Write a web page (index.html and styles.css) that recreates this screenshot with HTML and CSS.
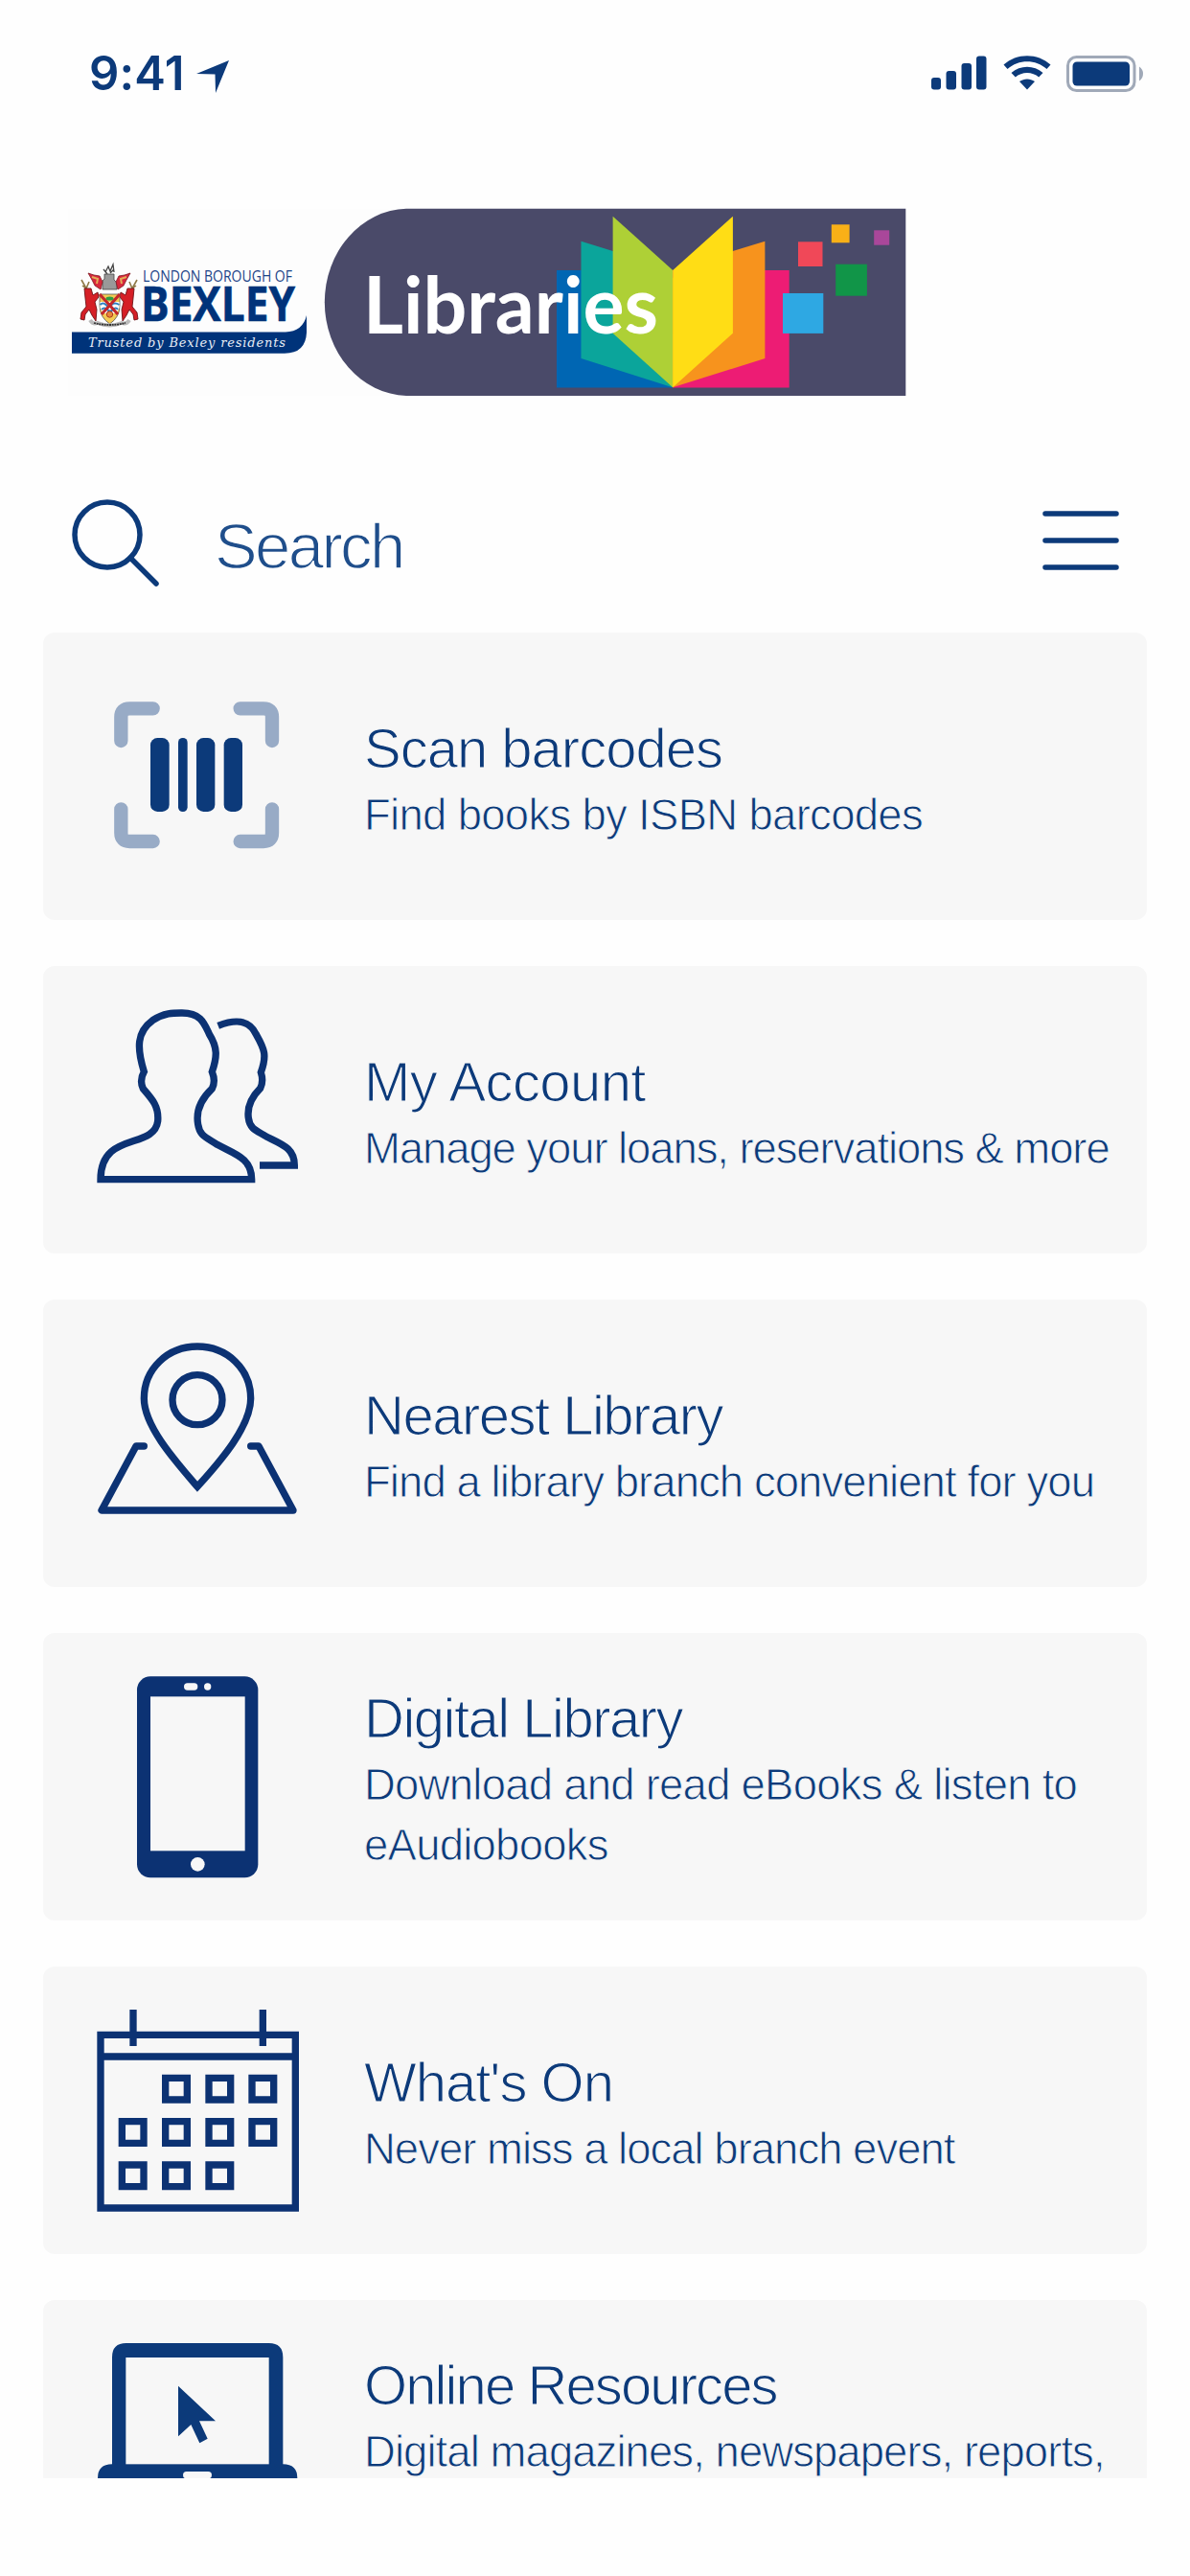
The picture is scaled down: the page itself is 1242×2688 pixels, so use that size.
FILE: index.html
```html
<!DOCTYPE html>
<html lang="en">
<head>
<meta charset="utf-8">
<title>Bexley Libraries</title>
<link rel="stylesheet" href="styles.css">
</head>
<body>
<div class="app">
  <header class="status">
    <span class="time">9:41</span>
    <svg class="locate" viewBox="0 0 34 34"><path d="M34 0 L20 34 L19.500 14.500 L0 14 Z"/></svg>
    <svg class="phone-state" viewBox="972 57 222 40">
      <rect x="972" y="81" width="10" height="12.500" rx="3"/><rect x="987.500" y="74" width="10.500" height="19.500" rx="3"/><rect x="1003.500" y="66" width="10.500" height="27.500" rx="3"/><rect x="1019" y="58.500" width="10.500" height="35" rx="3"/>
      <path d="M1047.500 67.500 C1061 55 1083 55 1096.500 67.500 L1092.500 72 C1081 61.500 1063 61.500 1051.500 72 Z"/>
      <path d="M1055.500 76 C1065 67.500 1079 67.500 1088.500 76 L1084.200 80.500 C1077.500 74.500 1066.500 74.500 1059.800 80.500 Z"/>
      <path d="M1064 85 C1069 81.500 1075 81.500 1080 85 L1072 93.500 Z"/>
      <rect class="shell" x="1114.500" y="59.500" width="69.500" height="35" rx="9"/>
      <rect x="1119.500" y="64.500" width="59.500" height="25" rx="4.500"/>
      <path class="nub" d="M1189 69.500 Q1193 72 1193 77 Q1193 82 1189 84.500 Z"/>
    </svg>
  </header>

  <svg class="logo" viewBox="71 217 875 197">
    <rect x="71" y="218" width="874" height="195" fill="#fdfdfd"/>
    <g class="crest">
      <path d="M110 284 l3 -6 2 5 3 -7 1 8 M108 281 l4 5 M119 281 l-4 4" fill="none" stroke="#444" stroke-width="1.300"/>
      <path d="M109 286 h10 v6 l3 3 v7 h-15 v-9 l2 -2z" fill="#999" stroke="#444" stroke-width=".8"/>
      <path d="M92 285 l6 2 6 1 3 6 -2 8 -6 -4 -3 -6z M136 285 l-6 2 -6 1 -3 6 2 8 6 -4 3 -6z" fill="#d8283c" stroke="#7d1822" stroke-width=".8"/>
      <path d="M96 289 l6 2 -1 5 M132 289 l-6 2 1 5" fill="none" stroke="#e3ad58" stroke-width="2"/>
      <path d="M85 292 l5 9 3 -7 M86 298 l5 4 M143 292 l-5 9 -3 -7 M142 298 l-5 4" fill="none" stroke="#8f7948" stroke-width="1.600"/>
      <path d="M88 301 l7 0 2 7 5 -3 1 5 -4 5 2 8 -1 12 -4 -6 -3 -6 -4 5 -1 6 -4 -1 1 -7 5 -6 -1 -9z" fill="#d51f26" stroke="#6d1216" stroke-width=".9"/>
      <path d="M140 301 l-7 0 -2 7 -5 -3 -1 5 4 5 -2 8 1 12 4 -6 3 -6 4 5 1 6 4 -1 -1 -7 -5 -6 1 -9z" fill="#d51f26" stroke="#6d1216" stroke-width=".9"/>
      <path d="M104 307 h21 v12 q0 12 -10.500 19 q-10.500 -7 -10.500 -19z" fill="#f3cb54" stroke="#555" stroke-width=".8"/>
      <path d="M104.500 315 h20 v6 l-3 6 h-14 l-3 -6z" fill="#fff"/>
      <path d="M104.500 318 q3 -3 6 0 t6 0 t8 0 M106 323 q3 -3 6 0 t6 0 t5 0" fill="none" stroke="#2d7fc1" stroke-width="2"/>
      <path d="M104 307 L123 328 M125 307 L106 328" stroke="#c3272b" stroke-width="3.200"/>
      <ellipse cx="114.500" cy="311.500" rx="4" ry="2" fill="#2e9c44"/>
      <circle cx="114.500" cy="328" r="3.200" fill="#e8863a" stroke="#a93820"/>
      <path d="M94 334 q3 5 8 3 q12 5 25 0 q5 2 8 -3" fill="none" stroke="#bbb" stroke-width="4"/>
      <path d="M98 337 q16 4 33 0" fill="none" stroke="#333" stroke-width="1.800" stroke-dasharray="2 .7"/>
    </g>
    <text class="borough" x="149" y="294" textLength="156" lengthAdjust="spacingAndGlyphs">LONDON BOROUGH OF</text>
    <text class="bexley" x="147" y="335" textLength="161" lengthAdjust="spacingAndGlyphs">BEXLEY</text>
    <path d="M75 346.500 H298 Q316 346 320 329 V347 Q319 368.700 297 368.700 H75 Z" fill="#00337a"/>
    <text class="motto" x="92" y="361.500" textLength="206">Trusted by Bexley residents</text>
    <path d="M945.300 217.700 H424 A88 97.700 0 0 0 424 413 H945.300 Z" fill="#4a4a69"/>
    <path d="M581 282 H702 V404.500 H581 Z" fill="#0066b3"/>
    <path d="M702 282 H823.700 V404.500 H702 Z" fill="#ed1c74"/>
    <path d="M606.500 251.700 L639.600 262 L702 290 V404.300 L606.500 374 Z" fill="#0ba59b"/>
    <path d="M798.400 251.700 L764.900 262 L702 290 V404.300 L798.400 374 Z" fill="#f7931d"/>
    <path d="M639.600 225.700 L702.200 282 V404.300 L639.600 347.700 Z" fill="#aed036"/>
    <path d="M764.900 225.700 L702.200 282 V404.300 L764.900 347.700 Z" fill="#ffdd15"/>
    <rect x="833" y="252.300" width="25.500" height="25.700" fill="#f04858"/>
    <rect x="867.800" y="234.300" width="18.800" height="19" fill="#f9b017"/>
    <rect x="912.200" y="240.300" width="16" height="15.400" fill="#a9479a"/>
    <rect x="872.200" y="275.700" width="32.700" height="33" fill="#119548"/>
    <rect x="817" y="306" width="42.300" height="41.900" fill="#2ea8e3"/>
    <text class="libraries" x="379" y="348" textLength="308" lengthAdjust="spacingAndGlyphs">Libraries</text>
  </svg>

  <div class="search">
    <svg class="lens" viewBox="0 0 94 94"><circle cx="38" cy="38" r="34"/><path d="M62 62 L89 89"/></svg>
    <span class="search-label">Search</span>
    <svg class="menu" viewBox="0 0 80 64"><path d="M3 4 H77 M3 32 H77 M3 60 H77"/></svg>
  </div>

  <main class="list">
    <section class="card scan">
      <svg class="icon" viewBox="183 165 630 630">
        <path class="frame" d="M259 369 V295 Q259 268 286 268 H359 M632 268 H705 Q732 268 732 295 V369 M732 583 V657 Q732 684 705 684 H632 M359 684 H286 Q259 684 259 657 V583"/>
        <rect x="351" y="360" width="59" height="231" rx="22"/><rect x="438" y="360" width="29" height="231" rx="14"/><rect x="495" y="360" width="58" height="231" rx="22"/><rect x="581" y="360" width="58" height="231" rx="22"/>
      </svg>
      <div class="copy"><h2>Scan barcodes</h2><p>Find books by ISBN barcodes</p></div>
    </section>
    <section class="card account">
      <svg class="icon line" viewBox="183 159 630 630">
        <path d="M195 692 C195 540 362 600 374 510 C378 465 358 442 328 408 Q316 382 331 355 C308 280 308 230 358 194 C395 170 425 171 450 171 C510 171 520 205 535 237 C562 280 560 308 544 355 Q556 385 544 408 C510 440 492 475 500 520 C505 555 525 560 560 583 C615 613 668 625 668 692 Z"/>
        <path d="M563 211 C620 189 660 192 682 238 C709 285 716 305 697 357 Q706 385 695 407 C665 437 653 465 658 500 C662 535 685 540 714 558 C765 583 802 595 802 648 H693"/>
      </svg>
      <div class="copy"><h2>My Account</h2><p>Manage your loans, reservations &amp; more</p></div>
    </section>
    <section class="card nearest">
      <svg class="icon line" viewBox="183 153 630 630">
        <path d="M498 604 C430 525 331 415 331 328 C331 235 405 165 498 165 C591 165 665 235 665 328 C665 415 570 525 498 604 Z"/>
        <circle cx="498" cy="332" r="78"/>
        <path class="round" d="M331 477 H306 L198 678 H798 L690 477 H665"/>
      </svg>
      <div class="copy"><h2>Nearest Library</h2><p>Find a library branch convenient for you</p></div>
    </section>
    <section class="card digital">
      <svg class="icon dark" viewBox="183 147 630 630">
        <rect x="309" y="148" width="379" height="630" rx="42"/>
        <g class="hole"><rect x="351" y="211" width="296" height="483"/><rect x="456" y="169" width="43" height="22" rx="11"/><circle cx="530" cy="180" r="11"/><circle cx="499" cy="736" r="22"/></g>
      </svg>
      <div class="copy"><h2>Digital Library</h2><p>Download and read eBooks &amp; listen to eAudiobooks</p></div>
    </section>
    <section class="card whats-on">
      <svg class="icon line" viewBox="183 156 630 630">
        <path d="M195 235 H805 V777 H195 Z M195 303 H805 M297 156 V270 M703 156 V270"/>
        <path d="M398 370 h68 v68 h-68z m136 0 h68 v68 h-68z m135 0 h68 v68 h-68z M262 506 h68 v68 h-68z m136 0 h68 v68 h-68z m136 0 h68 v68 h-68z m135 0 h68 v68 h-68z M262 642 h68 v68 h-68z m136 0 h68 v68 h-68z m136 0 h68 v68 h-68z"/>
      </svg>
      <div class="copy"><h2>What's On</h2><p>Never miss a local branch event</p></div>
    </section>
    <section class="card online">
      <svg class="icon" viewBox="183 165 630 630">
        <path d="M231 544 V209 Q231 165 275 165 H722 Q766 165 766 209 V544 Q811 544 811 588 Q811 633 766 633 H231 Q186 633 186 588 Q186 544 231 544 Z"/>
        <g class="hole"><rect x="274" y="210" width="448" height="334"/><rect x="453" y="567" width="90" height="22" rx="11"/></g>
        <path d="M438 299 L555 409 H504 L530 464 L505 478 L478 420 L438 457 Z"/>
      </svg>
      <div class="copy"><h2>Online Resources</h2><p>Digital magazines, newspapers, reports,</p></div>
    </section>
  </main>
</div>
</body>
</html>
```

FILE: styles.css
```css
* { box-sizing: border-box; }

body {
  margin: 0;
  background: #fefefe;
  color: #0c3a7a;
  fill: #0c3a7a;
  font-family: "Liberation Sans", Arial, sans-serif;
}

.app {
  display: flex;
  flex-direction: column;
  width: 1242px;
  height: 2688px;
  padding-bottom: 102px;
  overflow: hidden;
}

svg { display: block; flex: none; }

.status {
  display: flex;
  align-items: flex-start;
  height: 217px;
  padding: 57px 48px 0 93px;
}

.time {
  width: 112px;
  font: 600 49px/40px Inter, sans-serif;
  letter-spacing: 0.2px;
}

.locate { width: 34px; height: 34px; margin-top: 6px; }
.phone-state { width: 222px; height: 40px; margin-left: auto; }
.shell { fill: none; stroke: #a0a9b8; stroke-width: 3; }
.nub { fill: #a0a9b8; }

.logo { width: 875px; height: 197px; margin-left: 71px; }
.borough { font: 500 16.500px "Open Sans", sans-serif; fill: #1d4488; }
.bexley { font: 700 50px "Open Sans", sans-serif; fill: #00337a; stroke: #00337a; stroke-width: 0.6; }
.motto { font: italic 13px "DejaVu Serif", serif; fill: #e8edf5; }
.libraries { font: 700 82px Lato, sans-serif; fill: #fff; }

.search {
  display: flex;
  align-items: center;
  height: 246px;
  padding: 59px 74px 0 74px;
}

.lens { width: 94px; height: 94px; }
.lens, .menu { fill: none; stroke: #0c3a7a; stroke-width: 5.5; stroke-linecap: round; }
.menu { width: 80px; height: 64px; margin-left: auto; margin-top: -6px; }

.search-label {
  margin-left: 56px;
  padding-top: 6px;
  font-size: 67px;
  line-height: 70px;
  letter-spacing: -2.6px;
  color: #1f4e8b;
  -webkit-text-stroke: 1.500px #fefefe;
}

.list {
  display: flex;
  flex: 1;
  flex-direction: column;
  gap: 48px;
  min-height: 0;
  padding: 0 45px;
  overflow: hidden;
}

.card {
  display: flex;
  flex: none;
  align-items: center;
  gap: 69px;
  height: 300px;
  padding: 0 20px 0 56px;
  border-radius: 12px;
  background: #f7f7f7;
}

.icon { width: 210px; height: 210px; overflow: visible; }
.line { fill: none; stroke: #0c3273; stroke-width: 22; }
.dark { fill: #0c3273; }
.round { stroke-linecap: round; stroke-linejoin: round; }
.frame { fill: none; stroke: #98abc6; stroke-width: 43; stroke-linecap: round; }
.hole { fill: #f7f7f7; }

.copy { flex: 1; padding-top: 3px; }

.copy h2 {
  margin: 0;
  font-size: 58px;
  font-weight: 400;
  line-height: 77px;
  letter-spacing: -1px;
  -webkit-text-stroke: 1.200px #f7f7f7;
}

.copy p {
  margin: 0;
  font-size: 45.500px;
  line-height: 63px;
  letter-spacing: -0.7px;
  -webkit-text-stroke: 0.900px #f7f7f7;
}

.account h2 { letter-spacing: -0.6px; }
.account p { letter-spacing: -1.1px; }
.nearest h2, .digital h2 { letter-spacing: -1.5px; }
.nearest p { letter-spacing: -0.93px; }
.digital p { letter-spacing: -0.76px; }
.whats-on p { letter-spacing: -1px; }
.online h2 { letter-spacing: -1.9px; }
.online p { min-height: 126px; letter-spacing: -0.94px; }
```
